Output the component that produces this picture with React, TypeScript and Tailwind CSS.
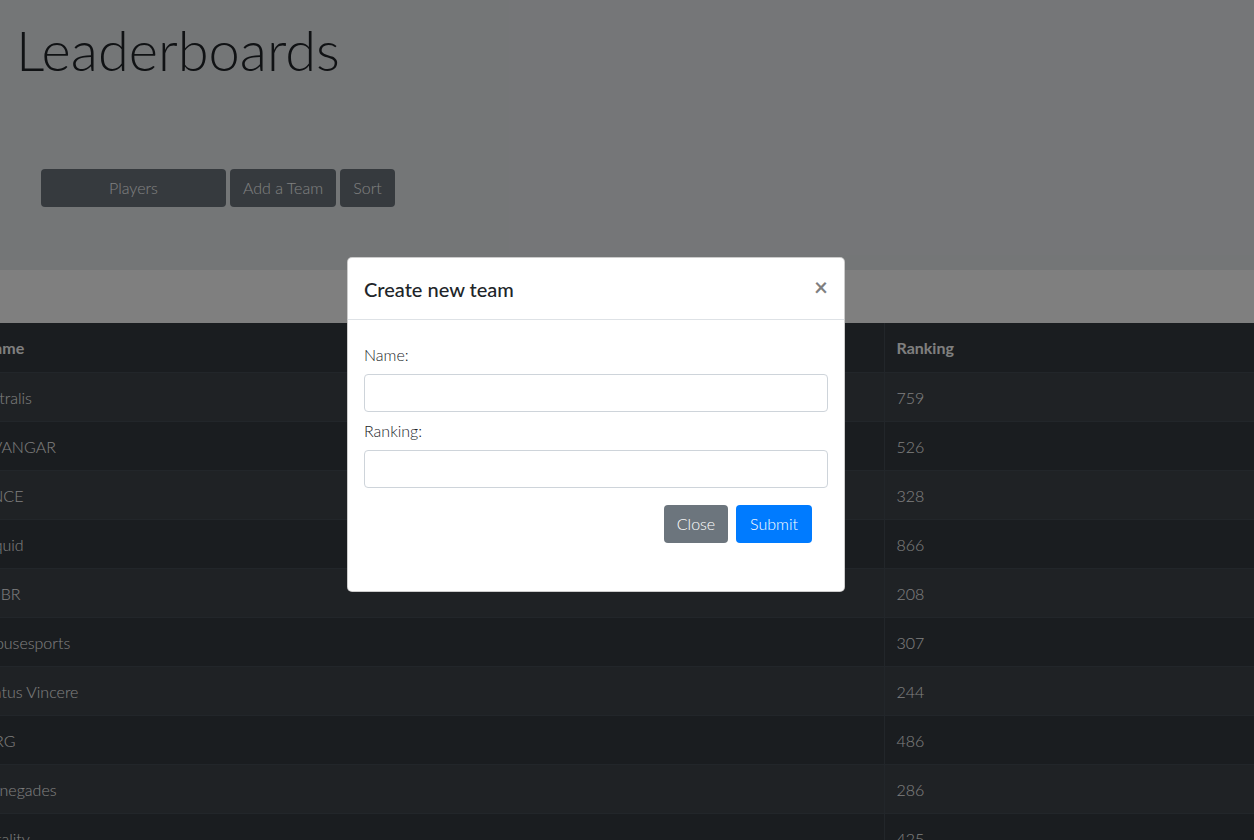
import React from 'react'

const teams = [
  { name: 'Astralis', ranking: 759 },
  { name: 'AVANGAR', ranking: 526 },
  { name: 'ENCE', ranking: 328 },
  { name: 'Liquid', ranking: 866 },
  { name: 'MIBR', ranking: 208 },
  { name: 'mousesports', ranking: 307 },
  { name: 'Natus Vincere', ranking: 244 },
  { name: 'NRG', ranking: 486 },
  { name: 'Renegades', ranking: 286 },
  { name: 'Vitality', ranking: 425 },
]

export default function App() {
  return (
    <div className="relative h-[840px] w-full overflow-hidden bg-white font-['Lato','Liberation_Sans',sans-serif] text-[#212529]">
      {/* jumbotron */}
      <div className="h-[270px] bg-[#e9ecef] px-4 pt-[16px]">
        <h1 className="text-[56px] font-light leading-[1.2]">Leaderboards</h1>
        <div className="mt-[86px] flex gap-1 pl-[25px]">
          <button className="h-[38px] w-[185px] rounded bg-[#6c757d] text-base font-light text-white">Players</button>
          <button className="h-[38px] w-[106px] rounded bg-[#6c757d] text-base font-light text-white">Add a Team</button>
          <button className="h-[38px] w-[55px] rounded bg-[#6c757d] text-base font-light text-white">Sort</button>
        </div>
      </div>

      <div className="mt-[53px] -ml-[30px] w-[calc(100%+30px)]">
        <table className="w-full border-collapse bg-[#343a40] text-left text-base text-white">
          <thead>
            <tr className="h-[49px]">
              <th className="w-[914px] border-r border-[#454d55] px-3 pt-px font-bold">Name</th>
              <th className="px-3 pt-px font-bold">Ranking</th>
            </tr>
          </thead>
          <tbody>
            {teams.map((t, i) => (
              <tr key={t.name} className={`h-[49px] border-t border-[#454d55] ${i % 2 === 0 ? 'bg-white/5' : ''}`}>
                <td className="border-r border-[#454d55] px-3 pt-[2px] font-light">{t.name}</td>
                <td className="px-3 pt-[2px] font-light">{t.ranking}</td>
              </tr>
            ))}
          </tbody>
        </table>
      </div>

      {/* modal backdrop */}
      <div className="absolute inset-0 bg-black/50" />

      <div className="absolute left-[347px] top-[257px] w-[498px] rounded-[5px] border border-black/20 bg-white">
        <div className="flex h-[62px] items-center justify-between border-b border-[#dee2e6] px-4">
          <h5 className="text-xl font-medium text-[#212529]">Create new team</h5>
          <button className="-mt-1 text-2xl font-bold leading-none text-black/50">×</button>
        </div>
        <div className="px-4 pb-[48px] pt-[23px]">
          <label className="mb-[7px] block text-base font-light leading-6">Name:</label>
          <input className="block h-[38px] w-full rounded border border-[#ced4da] px-3" />
          <label className="mb-[7px] mt-[7px] block text-base font-light leading-6">Ranking:</label>
          <input className="block h-[38px] w-full rounded border border-[#ced4da] px-3" />
          <div className="mt-[17px] flex justify-end gap-2 pr-4">
            <button className="h-[38px] w-[64px] rounded bg-[#6c757d] text-base font-light text-white">Close</button>
            <button className="h-[38px] w-[76px] rounded bg-[#007bff] text-base font-light text-white">Submit</button>
          </div>
        </div>
      </div>
    </div>
  )
}
